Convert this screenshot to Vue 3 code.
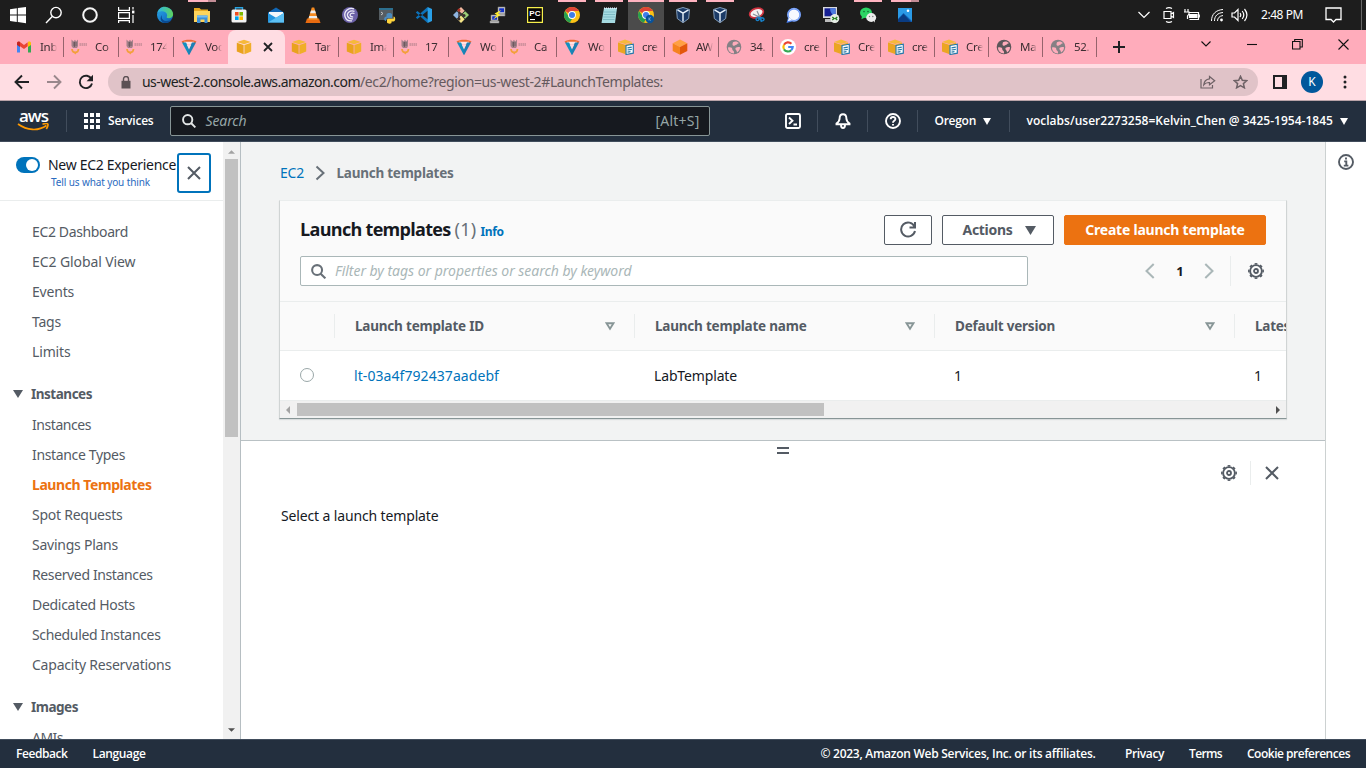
<script setup>
const launchers = [
  { icon: 'edge' },
  { icon: 'folder', run: 'multi' },
  { icon: 'store' },
  { icon: 'mail' },
  { icon: 'vlc' },
  { icon: 'torrent' },
  { icon: 'python' },
  { icon: 'vscode' },
  { icon: 'git' },
  { icon: 'putty' },
  { icon: 'pycharm' },
  { icon: 'chrome', run: 'one' },
  { icon: 'notepad', run: 'one' },
  { icon: 'chromek', run: 'active' },
  { icon: 'vbox', run: 'one' },
  { icon: 'vbox', run: 'one' },
  { icon: 'snip' },
  { icon: 'signal' },
  { icon: 'winscp' },
  { icon: 'wechat', run: 'one' },
  { icon: 'photos', run: 'multi' },
]

const tabs = [
  { icon: 'gmail', text: 'Inb' },
  { icon: 'canvas', text: 'Co' },
  { icon: 'canvas', text: '174' },
  { icon: 'voc', text: 'Voc' },
  { icon: 'ec2', active: true },
  { icon: 'ec2', text: 'Tar' },
  { icon: 'ec2', text: 'Ima' },
  { icon: 'canvas', text: '17' },
  { icon: 'voc', text: 'Wo' },
  { icon: 'canvas', text: 'Ca' },
  { icon: 'voc', text: 'Wo' },
  { icon: 'docs', text: 'cre' },
  { icon: 'cube', text: 'AW' },
  { icon: 'globe', text: '34.' },
  { icon: 'google', text: 'cre' },
  { icon: 'docs', text: 'Cre' },
  { icon: 'docs', text: 'cre' },
  { icon: 'docs', text: 'Cre' },
  { icon: 'globedark', text: 'Ma' },
  { icon: 'globe', text: '52.' },
]

const topLinks = [
  ['EC2 Dashboard', 96],
  ['EC2 Global View', 103.5],
  ['Events', 42],
  ['Tags', 29],
  ['Limits', 38.5],
]

const instanceLinks = [
  ['Instances', 59],
  ['Instance Types', 93],
  ['Launch Templates', 119.5, true],
  ['Spot Requests', 90.5],
  ['Savings Plans', 86],
  ['Reserved Instances', 120.5],
  ['Dedicated Hosts', 103],
  ['Scheduled Instances', 128.5],
  ['Capacity Reservations', 139],
]

const columns = [
  ['Launch template ID', 129],
  ['Launch template name', 151.5],
  ['Default version', 100],
  ['Latest version', 92],
]

// Tracks a label so that it spans the given width in pixels.
const vFit = {
  mounted(el, { value }) {
    const natural = el.getBoundingClientRect().width
    el.style.letterSpacing = (value - natural) / el.textContent.trim().length + 'px'
  },
}
</script>

<template>
  <svg class="sprite" width="0" height="0">
    <defs>
      <linearGradient id="gEdge" x1="0" y1="0" x2="1" y2="1">
        <stop offset="0" stop-color="#2aa7e0" /><stop offset=".5" stop-color="#1b83d2" /><stop offset="1" stop-color="#0c59a4" />
      </linearGradient>
      <linearGradient id="gEdge2" x1="0" y1="0" x2="1" y2="0">
        <stop offset="0" stop-color="#2bb5e8" /><stop offset="1" stop-color="#5ed35c" />
      </linearGradient>
    </defs>
    <symbol id="win" viewBox="0 0 18 18"><path fill="#fff" d="M1 3.2 7.8 2.2V8.6H1zM8.8 2 17 .9V8.6H8.8zM1 9.5H7.8V15.9L1 14.9zM8.8 9.5H17V17.2L8.8 16z" /></symbol>
    <symbol id="find" viewBox="0 0 18 18"><g fill="none" stroke="#fff" stroke-width="1.4"><circle cx="11" cy="6.6" r="5.2" /><path d="M7.2 10.4 1 17" /></g></symbol>
    <symbol id="cortana" viewBox="0 0 18 18"><circle cx="9" cy="9" r="6.8" fill="none" stroke="#f4f4f4" stroke-width="2" /></symbol>
    <symbol id="taskview" viewBox="0 0 18 18"><path fill="none" stroke="#fff" stroke-width="1.2" d="M1.6 1v3.4h10.8V1M1.6 17v-2.4h10.8V17M1.6 6.6h10.8v5.8H1.6zM16 1v2.6M16 9v8" /><path fill="#fff" d="M15 4.6h2.4v2.8H15z" /></symbol>
    <symbol id="edge" viewBox="0 0 18 18"><circle cx="9" cy="9" r="8" fill="url(#gEdge)" /><path fill="url(#gEdge2)" d="M1.3 7C3 1.600 7-.2 10.600 1.200c4 1 7 4.300 6.400 8C16.400 11.500 14 12.500 11.500 12c-1.500-.4-.5-1.500-.3-2.800C11 6.500 8 5 5.500 5.300 3.500 5.400 2 6 1.300 7z" /><path fill="#0b4a91" d="M6 9c-1.500 4.500 3 8 9.500 5-1.500 2-4 3.400-7 3C4 16 3.800 11 6 9z" /></symbol>
    <symbol id="folder" viewBox="0 0 18 18"><path fill="#e9a820" d="M1 2h5.500L8 3.500h7V6H1z" /><path fill="#ffd45c" d="M1 5h16v11H1z" /><path fill="#3d8fd8" d="M4 9.500h10.500V17h-3v-3.500h-4V17H4z" /><path fill="#76bdf0" d="M4 9.500h10.500v2H4z" /></symbol>
    <symbol id="store" viewBox="0 0 18 18"><path fill="none" stroke="#29a3e0" stroke-width="1.400" d="M5.500 4.500V1.800h7v2.700" /><rect x="1.500" y="3.600" width="15" height="13" rx="1.500" fill="#f3f3f3" /><path fill="#f25022" d="M5 6h3.600v3.600H5z" /><path fill="#7fba00" d="M9.400 6H13v3.600H9.400z" /><path fill="#00a4ef" d="M5 10.400h3.600V14H5z" /><path fill="#ffb900" d="M9.400 10.400H13V14H9.400z" /></symbol>
    <symbol id="mail" viewBox="0 0 18 18"><path fill="#1267b4" d="M1 6.500 9 1.500l8 5V16H1z" /><path fill="#f4f8fb" d="M2 6h14v4l-7 4-7-4z" /><path fill="#2597e0" d="M1 7l8 4.800L17 7v9.500H1z" /><path fill="#5cc0f3" d="M1 16.500 17 7v9.500z" /></symbol>
    <symbol id="vlc" viewBox="0 0 18 18"><path fill="#e96b10" d="M3 12.500h12l1.500 4.500h-15z" /><path fill="#f68b20" d="M7.800 1.500h2.400L14 14H4z" /><path fill="#eee" d="m7 4.500-.9 2.800h5.800L11 4.500zM5.300 10h7.400l.7 2.300H4.600z" /></symbol>
    <symbol id="torrent" viewBox="0 0 18 18"><circle cx="9" cy="9" r="8" fill="#6c62a8" /><g fill="none" stroke="#eceaf6" stroke-width="1.300"><path d="M13 2.800C7 .8 2.700 6 4 10.500c1 3.200 4 4.700 7 4.300" /><path d="M13.500 5.300C9 3.600 5.600 7 6.600 10c.8 2 3 3.200 5.400 2.800" /><path d="M13.500 7.500C10.500 6.400 8.700 8 9.200 9.600c.5 1 1.600 1.500 3 1.200" /></g></symbol>
    <symbol id="python" viewBox="0 0 18 18"><path fill="#555d62" d="M1 2h14v12H1z" /><path fill="#2d6f8e" d="M1 2h14v2H1z" /><path stroke="#c6c6c6" fill="none" d="m3 6 2 1.500L3 9" /><path fill="#4b8bbe" d="M8.500 8.500c0-2 5.500-2 5.500 0V12H9.500c-1.500 0-1.500 2-1.500 3-2.500 0-2.500-4.500.5-4.500z" /><path fill="#ffd43b" d="M15.500 10.500c2.300 0 2.300 5 0 5h-2V17c-1 1-4 .8-4.500-.5V14c0-1 1-1.300 2-1.300h4.500z" /></symbol>
    <symbol id="vscode" viewBox="0 0 18 18"><path fill="#0c71b9" d="m.8 6.500 1.600-1.400L13.500 14l-1 3zM.8 11.500l1.600 1.400L13.500 4l-1-3z" /><path fill="#29a0e8" d="m12.600 1 4.400 2v12l-4.400 2V1z" /></symbol>
    <symbol id="git" viewBox="0 0 18 18"><path fill="#f0b8a0" d="M9 1 5.300 4.700 9 8.400l3.700-3.700z" /><path fill="#8fb4e0" d="M4.800 5.300 1 9l3.800 3.700L8.500 9z" /><path fill="#9ccf78" d="M13.200 5.300 9.500 9l3.700 3.700L17 9z" /><path fill="#f4e488" d="M9 9.600 5.300 13.300 9 17l3.700-3.700z" /><path d="M7 4v9M7 6l5 4" stroke="#392b2b" stroke-width="1.300" /><circle cx="7" cy="13" r="1.500" fill="#392b2b" /><circle cx="12" cy="9.500" r="1.500" fill="#392b2b" /><circle cx="7" cy="4" r="1.500" fill="#b33125" /></symbol>
    <symbol id="putty" viewBox="0 0 18 18"><path fill="#d4d4d4" stroke="#777" stroke-width=".6" d="M9 1h7v7H9zM2 9h7v6H2zM8 8h8v2H8zM1 15h9v2H1z" /><path fill="#1230c8" d="M10.200 2.200H15v4h-4.800zM3.200 10.200H8v3.600H3.200z" /><path fill="#ffec2b" d="m12.500 4-7 3.500 2.500 1.500-4 4.500L11.500 9 9 7.800z" /></symbol>
    <symbol id="pycharm" viewBox="0 0 18 18"><path fill="#050505" stroke="#f6ef4b" stroke-width="1.200" d="M1.600 1.600h14.800v14.800H1.600z" /><text x="3.300" y="9.500" fill="#fff" font-family="Liberation Sans, sans-serif" font-weight="700" font-size="8">PC</text><path fill="#fff" d="M4 13h5v1.100H4z" /></symbol>
    <symbol id="chrome" viewBox="0 0 18 18"><circle cx="9" cy="9" r="8" fill="#fbc116" /><path fill="#de4437" d="M9 9 2.100 5A8 8 0 0 1 16 5H9z" /><path fill="#269f50" d="M2.100 5 6 11l3 2-2.200 3.700A8 8 0 0 1 2.100 5z" /><circle cx="9" cy="9" r="3.900" fill="#fff" /><circle cx="9" cy="9" r="3" fill="#3f7de8" /></symbol>
    <symbol id="chromek" viewBox="0 0 18 18"><use href="#chrome" /><circle cx="12.800" cy="13" r="4.200" fill="#08539c" /><path stroke="#9cc3e8" stroke-width=".7" fill="none" d="M12 11.500v3M13.800 11.500l-1.600 1.500 1.600 1.500" /></symbol>
    <symbol id="notepad" viewBox="0 0 18 18"><path fill="#a6dbe2" d="M4 2h13l-2 15H1.500z" /><path stroke="#6fb0ba" stroke-width=".7" d="M4 6h11.500M3.600 8.500h11.500M3.300 11h11.500M3 13.500h11.500" /><path stroke="#eef" stroke-width="1.200" stroke-dasharray="1 1" d="M4 2.200h13" /></symbol>
    <symbol id="vbox" viewBox="0 0 18 18"><path fill="#1b3a66" d="m9 1.500 6.500 2-.8 9L9 16.800 3.300 12.500l-.8-9z" /><path fill="none" stroke="#e8f2fb" stroke-width="1.400" d="m3.500 3.800 5.500 3.400 5.500-3.400M9 7v8.700" /><path fill="none" stroke="#8fa9c6" stroke-width=".9" d="m9 1.500 6.500 2-.8 9L9 16.800 3.300 12.500l-.8-9z" /></symbol>
    <symbol id="snip" viewBox="0 0 18 18"><ellipse cx="8.500" cy="7" rx="7" ry="4.600" fill="#f6f1f1" stroke="#cf3340" stroke-width="1.700" transform="rotate(-18 8.500 7)" /><path stroke="#8a929b" stroke-width="1.200" d="m9 5 3 6.500M5 8l6.500 3" /><path fill="none" stroke="#177fc6" stroke-width="1.400" d="M9.500 11.600a1.500 1.500 0 1 0 .1 0M11 11.500l4 .5a1.500 1.500 0 1 1-2 1.500zM12 12l1.500 4" /></symbol>
    <symbol id="signal" viewBox="0 0 18 18"><circle cx="9" cy="8.800" r="7" fill="#4a80f0" /><path fill="#4a80f0" d="m3 12-1.500 5L7 15.500z" /><circle cx="9" cy="8.800" r="6.200" fill="none" stroke="#dfe8ff" stroke-width=".5" /><circle cx="9" cy="8.800" r="5.300" fill="#f7f9ff" /><path fill="#f7f9ff" d="m4 11.500-1.100 3.800L7 14z" /></symbol>
    <symbol id="winscp" viewBox="0 0 18 18"><path fill="#d8dade" d="M1 1h14v11H1z" /><path fill="#151f94" d="M2.500 2.300h11v8H2.500z" /><path fill="#4c7be0" d="M8 2.300h5.500v8C10 9 8 6 8 2.300z" /><path fill="#bcbcbc" d="M3 13h9v3H3z" /><circle cx="12.800" cy="12.500" r="4.500" fill="#e7eee7" /><path fill="none" stroke="#23801f" stroke-width="1.300" d="m10.300 11 1.800 1.500-1.800 1.500M15.300 11l-1.800 1.500 1.800 1.500" /></symbol>
    <symbol id="wechat" viewBox="0 0 18 18"><ellipse cx="7" cy="6.800" rx="6" ry="5.200" fill="#2bd564" /><path fill="#2bd564" d="m3 10-.6 3.300L6 11.500z" /><circle cx="5" cy="5.600" r=".8" fill="#136b34" /><circle cx="9" cy="5.600" r=".8" fill="#136b34" /><ellipse cx="12.200" cy="11.500" rx="5" ry="4.400" fill="#ececec" /><path fill="#ececec" d="m14.500 14.500 1.500 2.300-.2-3z" /><circle cx="10.500" cy="10.500" r=".7" fill="#777" /><circle cx="13.800" cy="10.500" r=".7" fill="#777" /></symbol>
    <symbol id="photos" viewBox="0 0 18 18"><path fill="#2a9ae6" d="M2 2h14v14H2z" /><path fill="#0f60b4" d="m2 13 5.500-6L16 15v1H2z" /><path fill="#0a3c82" d="M2 13.500 7.500 8l7.500 8H2z" /><circle cx="12" cy="4.800" r="1.300" fill="#fff" /></symbol>

    <symbol id="gmail" viewBox="0 0 16 16"><path fill="#4285f4" d="M1 4.500v9h3V7z" /><path fill="#34a853" d="M12 7v6.500h3v-9z" /><path fill="#ea4335" d="M1 5c0-2.200 2-2.800 3.300-1.700L8 6l3.700-2.700v4L8 10 4 7.200z" /><path fill="#c5221f" d="M1 4.300V6l3 2V3.100C2.700 2 1 2.800 1 4.300z" /><path fill="#fbbc04" d="M15 4.300V6l-3 2V3.100c1.300-1.100 3-.3 3 1.200z" /></symbol>
    <symbol id="canvas" viewBox="0 0 16 16"><path fill="#857379" d="M.5.5 2.500 2.500 4 .8l1.200 1.700L7 .5V7L6 9H2L.5 7z" opacity=".75" /><path stroke="#5e5055" stroke-width=".7" d="M2 4h4M2 6h4M3.500 3v5" /><path stroke="#ab7c87" stroke-width="3.200" stroke-dasharray="1.400 .6" opacity=".6" d="M8.500 5.500H16" /><path fill="none" stroke="#f3a03c" stroke-width="1.700" d="M1 10c.2 4.500 6.300 4.500 6.500 0" /><path fill="#f3a03c" d="M2.500 13.300h3.500L4.300 15.500z" /></symbol>
    <symbol id="voc" viewBox="0 0 16 16"><path fill="#ee6a34" d="M.5 2.500C4 .3 12 .3 15.500 2.500L14.300 4H1.700z" /><path fill="#ffe3e3" d="M3 2.800h10l-1 2.400H4z" /><path fill="#138fc0" d="M1 3.500h4L8.500 10v5.500H7.500z" /><path fill="#1e7fb2" d="M15 3.500h-4L7.500 10v5.500h1z" /><path fill="#ffd8dd" d="m5.700 5.500 2.300 5 2.300-5z" /></symbol>
    <symbol id="ec2" viewBox="0 0 16 16"><path fill="#f6b93a" d="m8 .8 7 2.200-7 2.300L1 3z" /><path fill="#e9a21e" d="M.8 3.800 7.600 6v9.300L.8 12.600z" /><path fill="#f0ae28" d="M15.200 3.800 8.400 6v9.300l6.800-2.700z" /></symbol>
    <symbol id="docs" viewBox="0 0 16 16"><path fill="#f6b93a" d="M7 .5 14 3 7 5 0 3z" /><path fill="#eba522" d="M0 3.500 7 5.700V15l-7-2.500z" /><path fill="#f0ae28" d="M14 3.500 7 5.700V15l7-2.500z" /><path fill="#fff" stroke="#2879aa" stroke-width="1.200" d="m8 6.500 7.300-1.300v9L8 15.500z" /><path stroke="#2879aa" stroke-width="1.200" d="m9.500 8.800 4.300-.7M9.500 11l4.300-.7M9.500 13.200l3-.5" /></symbol>
    <symbol id="cube" viewBox="0 0 16 16"><path fill="#ffa043" d="m8 .4 7.300 3.800L8 8 .7 4.200z" /><path fill="#f5821f" d="M.7 4.200 8 8v7.800L.7 12z" /><path fill="#e3570b" d="M15.300 4.200 8 8v7.800l7.300-3.800z" /></symbol>
    <symbol id="globe" viewBox="0 0 16 16"><circle cx="8" cy="8" r="7.300" fill="#858085" /><path fill="#ffacbb" d="M2 8.500c3-.5 4.500.3 4.300 2 .2 1.400 1.700 1 1.700 2.800v1.200C4.500 14.300 2 12 2 8.500zM7 3.300c2-1.500 4.500-1 6 1-2 .3-2 1.500-3.500 1.700-.5 1.300-3 1-3-.5 0-1 .3-1.500.5-2.200zM9.500 9c1.500-1 4.500-1.200 4.500-.5 0 2-1.200 4-3 5 0-2.500-2-2.500-1.500-4.500z" /></symbol>
    <symbol id="globedark" viewBox="0 0 16 16"><circle cx="8" cy="8" r="7.300" fill="#5c565a" /><path fill="#ffacbb" d="M2 8.500c3-.5 4.500.3 4.300 2 .2 1.400 1.700 1 1.700 2.800v1.200C4.500 14.300 2 12 2 8.500zM7 3.300c2-1.500 4.500-1 6 1-2 .3-2 1.500-3.500 1.700-.5 1.300-3 1-3-.5 0-1 .3-1.500.5-2.200zM9.500 9c1.500-1 4.500-1.200 4.500-.5 0 2-1.200 4-3 5 0-2.500-2-2.500-1.500-4.500z" /></symbol>
    <symbol id="google" viewBox="0 0 16 16"><circle cx="8" cy="8" r="8" fill="#fff" /><g fill="none" stroke-width="2.200"><path stroke="#ea4335" d="M4 5.700A4.700 4.700 0 0 1 11.400 4.800" /><path stroke="#fbbc05" d="M4 5.700a4.700 4.700 0 0 0 0 4.600" /><path stroke="#34a853" d="M4 10.300a4.700 4.700 0 0 0 7.200.9" /><path stroke="#4285f4" d="M11.200 11.200A4.700 4.700 0 0 0 12.700 8H8.200" /></g></symbol>

    <symbol id="gear" viewBox="0 0 16 16"><g fill="none" stroke="#545b64"><circle cx="8" cy="8" r="5.900" stroke-width="1.900" /><circle cx="8" cy="8" r="7.200" stroke-width="1.500" pathLength="80" stroke-dasharray="5 5" stroke-dashoffset="2.500" /><circle cx="8" cy="8" r="2" stroke-width="1.800" /></g></symbol>
    <symbol id="cross" viewBox="0 0 14 14"><path fill="none" stroke="#545b64" stroke-width="2" d="m1 1 12 12M13 1 1 13" /></symbol>
    <symbol id="lens" viewBox="0 0 16 16"><g fill="none" stroke="currentColor" stroke-width="2.200"><circle cx="6.500" cy="6.500" r="5.300" /><path d="m10.300 10.300 5 5" /></g></symbol>
    <symbol id="sort" viewBox="0 0 10 9"><path fill="none" stroke="#879596" stroke-width="1.900" d="M1.500 1.200h7L5 6.800z" /></symbol>
  </svg>

  <div class="screen">
    <header class="taskbar">
      <div class="system">
        <span v-for="n in ['win', 'find', 'cortana', 'taskview']" :key="n"><svg><use :href="'#' + n" /></svg></span>
      </div>
      <div class="launchers">
        <span v-for="(l, i) in launchers" :key="i" :class="l.run"><svg><use :href="'#' + l.icon" /></svg></span>
      </div>
      <div class="tray">
        <svg width="14" height="10" viewBox="0 0 14 10"><path d="m1.500 2 5.500 5.500L12.500 2" /></svg>
        <svg width="14" height="18" viewBox="0 0 14 18"><path d="M4 2.500c2-1.200 4-1.200 6 0M4 15.500c2 1.200 4 1.200 6 0M2 5.500h7v7H2zM9 8l2.500-1.500v5L9 10" /></svg>
        <svg width="17" height="14" viewBox="0 0 17 14"><path d="M2 1v3M5 1v3M1 4h5v2L4.500 8v3M5.500 4.500h10v7h-9" /><path d="M6.500 6.500h7.500v3H6.500zM16.300 6.500v3" fill="#fff" /></svg>
        <svg width="14" height="14" viewBox="0 0 14 14"><g stroke-width="1"><path d="M1.500 13C1.500 6 6 2 13 1.500" /><path d="M4.500 13c0-5 3-8 8.500-8.500" /><path d="M7.500 13c0-3 2-5 5.500-5.500" /></g><circle cx="11.500" cy="12" r="1.400" fill="#fff" stroke="none" /></svg>
        <svg width="17" height="14" viewBox="0 0 17 14"><path d="M1 5h2.500L7 1.500v11L3.500 9H1zM9 5c1 1.300 1 2.700 0 4M11.200 3c2 2.500 2 5.500 0 8M13.500 1c3 3.700 3 8.300 0 12" /></svg>
        <span v-fit="42">2:48 PM</span>
        <svg class="note" width="17" height="16" viewBox="0 0 17 16"><path d="M1 1h15v11.500h-5L8.500 15 6 12.500H1z" stroke-width="1.300" /></svg>
        <i></i>
      </div>
    </header>

    <nav class="tabs">
      <div v-for="(t, i) in tabs" :key="i" class="tab" :class="{ on: t.active, before: i === 3, narrow: i > 7 }">
        <svg class="fav"><use :href="'#' + t.icon" /></svg>
        <svg v-if="t.active" class="tabx" viewBox="0 0 10 10"><path d="m1 1 8 8M9 1 1 9" /></svg>
        <span v-else>{{ t.text }}</span>
      </div>
      <svg class="plus" viewBox="0 0 12 12"><path d="M6 0v12M0 6h12" /></svg>
      <div class="winctl">
        <svg width="12" height="8" viewBox="0 0 12 8"><path d="m1.500 1.500 4.500 4.500 4.500-4.500" /></svg>
        <svg width="10" height="10" viewBox="0 0 10 10"><path d="M0 5.500h10" /></svg>
        <svg width="11" height="11" viewBox="0 0 11 11"><path d="M.5 2.500h7.500v7.500H.5zM2.700 2.500V.5h7.600v7.500H8.200" /></svg>
        <svg width="11" height="11" viewBox="0 0 11 11"><path d="m.5.5 10 10M10.500.5l-10 10" /></svg>
      </div>
    </nav>

    <div class="toolbar">
      <div class="moves">
        <svg width="16" height="16" viewBox="0 0 16 16"><path d="M15 8H2M8 1.500 1.500 8 8 14.500" /></svg>
        <svg class="dim" width="16" height="16" viewBox="0 0 16 16"><path d="M1 8h13M8 1.500 14.500 8 8 14.500" /></svg>
        <svg width="16" height="16" viewBox="0 0 16 16"><path d="M13.500 5A6.200 6.200 0 1 0 14 9.500" /><path fill="#202124" stroke="none" d="M15 .8v6.400H8.600z" /></svg>
      </div>
      <div class="omni">
        <svg class="lock" width="10" height="13" viewBox="0 0 10 13"><path fill="#5c5054" d="M.5 4.800h9V12.500h-9z" /><path fill="none" stroke="#5c5054" stroke-width="1.400" d="M2.500 5V3a2.500 2.500 0 0 1 5 0v2" /></svg>
        <b v-fit="218">us-west-2.console.aws.amazon.com</b><span v-fit="303">/ec2/home?region=us-west-2#LaunchTemplates:</span>
        <svg class="share" width="16" height="14" viewBox="0 0 16 14"><path d="M1 4v9h11.500v-3M9.500 1.500 14.700 5.700 9.500 9.800V7.500C6.500 7.300 5 8.300 3.700 10 4 6.500 6 4.200 9.500 3.800z" /></svg>
        <svg class="star" width="15" height="14" viewBox="0 0 15 14"><path d="m7.500 1.300 1.800 4 4.400.4-3.300 2.900 1 4.200-3.900-2.200-3.900 2.200 1-4.200L1.300 5.700l4.400-.4z" /></svg>
      </div>
      <svg class="panel" width="14" height="14" viewBox="0 0 14 14"><path d="M1 1h12v12H1z" fill="none" stroke="#202124" stroke-width="2" /><path d="M9 1h4v12H9z" fill="#202124" /></svg>
      <span class="avatar">K</span>
      <svg class="dots" width="4" height="14" viewBox="0 0 4 14"><circle cx="2" cy="2" r="1.500" /><circle cx="2" cy="7" r="1.500" /><circle cx="2" cy="12" r="1.500" /></svg>
    </div>

    <div class="awsnav">
      <div class="logo"><span v-fit="29">aws</span>
        <svg width="33" height="9" viewBox="0 0 33 9"><path d="M1 1c9 6.500 20 7.500 28.500 1.500" /><path d="M25.500 1.200c3-.9 5-.6 5.300 0s-.2 2.800-1.500 4.800" /></svg>
      </div>
      <i></i>
      <svg class="grid" width="16" height="16" viewBox="0 0 16 16"><path d="M0 0h4v4H0zM6 0h4v4H6zM12 0h4v4h-4zM0 6h4v4H0zM6 6h4v4H6zM12 6h4v4h-4zM0 12h4v4H0zM6 12h4v4H6zM12 12h4v4h-4z" /></svg>
      <b v-fit="45.500" class="svc">Services</b>
      <div class="search"><svg><use href="#lens" /></svg><em v-fit="41">Search</em><span v-fit="44">[Alt+S]</span></div>
      <svg class="shell" width="16" height="16" viewBox="0 0 16 16"><rect x="1" y="1" width="14" height="14" rx="1.500" /><path d="m4 4.500 3.500 3.300L4 11M8.500 11.500H12" /></svg>
      <i></i>
      <svg class="nico" width="16" height="16" viewBox="0 0 16 16"><path d="M8 1.200c-2.300 0-3.400 2-3.400 4.200 0 2.300-1.300 3.700-3.100 5v.9h13v-.9c-1.800-1.300-3.100-2.700-3.100-5 0-2.200-1.100-4.200-3.400-4.200zM6 12c0 4 4 4 4 0" /></svg>
      <i></i>
      <svg class="nico" width="16" height="16" viewBox="0 0 16 16"><circle cx="8" cy="8" r="7" /><path d="M5.700 6.300c0-3 4.700-3 4.700-.2C10.400 7.800 8 7.800 8 9.700M8 11v1.600" /></svg>
      <i></i>
      <b v-fit="41.500" class="region">Oregon</b><svg class="caret" viewBox="0 0 8 7"><path d="M0 0h8L4 7z" /></svg>
      <i class="wide"></i>
      <b v-fit="306.500" class="user">voclabs/user2273258=Kelvin_Chen @ 3425-1954-1845</b><svg class="caret" viewBox="0 0 8 7"><path d="M0 0h8L4 7z" /></svg>
    </div>

    <div class="body">
      <aside>
        <div class="side">
          <div class="promo">
            <span class="toggle"></span>
            <div><span v-fit="128">New EC2 Experience</span><a v-fit="99">Tell us what you think</a></div>
            <button><svg width="14" height="14"><use href="#cross" /></svg></button>
          </div>
          <ul class="first"><li v-for="[t, w] in topLinks" :key="t"><span v-fit="w">{{ t }}</span></li></ul>
          <h4><svg viewBox="0 0 10 8"><path d="M0 0h10L5 8z" /></svg><span v-fit="61">Instances</span></h4>
          <ul><li v-for="[t, w, on] in instanceLinks" :key="t" :class="{ on }"><span v-fit="w">{{ t }}</span></li></ul>
          <h4><svg viewBox="0 0 10 8"><path d="M0 0h10L5 8z" /></svg><span v-fit="47">Images</span></h4>
          <ul><li><span v-fit="31">AMIs</span></li></ul>
        </div>
        <div class="vscroll">
          <svg viewBox="0 0 8 4"><path fill="#a3a3a3" d="M0 4h8L4 0z" /></svg>
          <span></span>
          <svg viewBox="0 0 8 4"><path fill="#505050" d="M0 0h8L4 4z" /></svg>
        </div>
      </aside>

      <main>
        <section class="top">
          <div class="crumbs"><a v-fit="24">EC2</a><svg width="10" height="16" viewBox="0 0 10 16"><path d="m1.500 1.500 7 6.500-7 6.500" /></svg><b v-fit="117">Launch templates</b></div>
          <div class="card">
            <div class="chead">
              <h2 v-fit="150.500">Launch templates</h2><span v-fit="22" class="count">(1)</span><b v-fit="23" class="info">Info</b>
              <div class="btns">
                <button class="refresh"><svg width="18" height="18" viewBox="0 0 18 18"><path d="M15.500 5.500a7 7 0 1 0 .5 4.500M16 1v5.500h-5.500" /></svg></button>
                <button class="actions"><span v-fit="50">Actions</span><svg width="11" height="9" viewBox="0 0 11 9"><path d="M0 0h11L5.500 9z" /></svg></button>
                <button class="create"><span v-fit="159.500">Create launch template</span></button>
              </div>
            </div>
            <div class="cfilter">
              <div class="input"><svg><use href="#lens" /></svg><em v-fit="296.500">Filter by tags or properties or search by keyword</em></div>
              <svg class="prev" viewBox="0 0 10 16"><path d="M8.700 1 1.500 8l7.200 7" /></svg>
              <b>1</b>
              <svg class="next" viewBox="0 0 10 16"><path d="m1.300 1 7.200 7-7.200 7" /></svg>
              <i></i>
              <svg class="gear"><use href="#gear" /></svg>
            </div>
            <div class="thead">
              <div v-for="[t, w] in columns" :key="t"><b v-fit="w">{{ t }}</b><svg><use href="#sort" /></svg></div>
            </div>
            <div class="trow">
              <span class="radio"></span>
              <div><a v-fit="145">lt-03a4f792437aadebf</a></div>
              <div><span v-fit="83">LabTemplate</span></div>
              <div>1</div>
              <div>1</div>
            </div>
            <div class="hscroll">
              <svg viewBox="0 0 4 8"><path fill="#a3a3a3" d="M4 0v8L0 4z" /></svg><span></span><svg viewBox="0 0 4 8"><path fill="#505050" d="M0 0v8l4-4z" /></svg>
            </div>
          </div>
        </section>
        <section class="detail">
          <div class="handle"></div>
          <div class="dtools"><svg class="gear"><use href="#gear" /></svg><i></i><svg width="14" height="14"><use href="#cross" /></svg></div>
          <p><span v-fit="157.500">Select a launch template</span></p>
        </section>
      </main>

      <div class="rail">
        <svg width="16" height="16" viewBox="0 0 16 16"><circle cx="8" cy="8" r="7" /><path d="M8 3.600v1.900M6.200 7.400H8.300v4M5.800 11.600h4.600" /></svg>
      </div>
    </div>

    <footer>
      <span v-fit="51.500">Feedback</span><span v-fit="53">Language</span>
      <span v-fit="275" class="copy">© 2023, Amazon Web Services, Inc. or its affiliates.</span>
      <span v-fit="39">Privacy</span><span v-fit="33">Terms</span><span v-fit="103">Cookie preferences</span>
    </footer>
  </div>
</template>

<style>
body { margin: 0; overflow: hidden; }
</style>

<style scoped>
.sprite { position: absolute; }
.screen { width: 1366px; height: 768px; display: flex; flex-direction: column; overflow: hidden; background: #fff; color: #16191f; font: 14px/20px "Noto Sans", "Open Sans", sans-serif; white-space: nowrap; }
.screen * { box-sizing: border-box; }
svg, span, b, em, a, i { flex: none; }
svg { display: block; }
button { font: inherit; margin: 0; padding: 0; background: #fff; display: flex; align-items: center; justify-content: center; }

.taskbar { height: 30px; background: #1d1d1d; display: flex; flex: none; }
.system, .launchers { display: flex; }
.system span { width: 36px; height: 30px; display: grid; place-items: center; }
.launchers { margin-left: 2px; }
.launchers span { width: 37px; height: 30px; display: grid; place-items: center; position: relative; }
.system svg, .launchers svg { width: 18px; height: 18px; }
.launchers .one::before, .launchers .multi::before, .launchers .active::before { content: ""; position: absolute; top: 0; left: 5px; width: 28px; height: 2px; background: #ffb3c0; }
.launchers .multi::before { background: linear-gradient(90deg, #ffb3c0 20px, #c38d96 20px); }
.launchers .active { background: linear-gradient(#4b4b4b, #4b4b4b) no-repeat 1px 0 / 36px 30px; }
.launchers span.active::before { left: 1px; width: 36px; }
.tray { margin-left: auto; display: flex; align-items: center; color: #fff; font-size: 12px; }
.tray svg { fill: none; stroke: #fff; stroke-width: 1.200; margin-right: 11px; }
.tray svg:nth-of-type(2) { margin-right: 7.500px; }
.tray svg:nth-of-type(3) { margin-right: 10px; }
.tray svg:nth-of-type(4) { margin-right: 7px; }
.tray svg:nth-of-type(5) { margin-right: 13px; }
.tray .note { margin: 0 19px 0 22px; }
.tray i { width: 1px; height: 30px; background: #666; margin-right: 4px; }

.tabs { height: 34px; flex: none; background: #ffacbb; display: flex; padding-left: 9px; }
.tab { width: 55px; flex: none; display: flex; align-items: center; padding-left: 7px; position: relative; }
.tab.narrow { width: 54px; }
.tab::after { content: ""; position: absolute; right: 0; top: 7px; width: 1px; height: 20px; background: #96636c; }
.tab.on::after, .tab.before::after { display: none; }
.fav { width: 16px; height: 16px; }
.tab span { width: 17px; margin-left: 8px; overflow: hidden; font-size: 11.500px; letter-spacing: -.3px; color: #3b2d31; -webkit-mask-image: linear-gradient(90deg, #000 65%, transparent); mask-image: linear-gradient(90deg, #000 65%, transparent); }
.tab.on { background: #ffdde3; border-radius: 8px 8px 0 0; width: 57px; margin: 0 -1px; padding-left: 8px; }
.tabx { width: 10px; height: 10px; margin-left: 11px; fill: none; stroke: #202124; stroke-width: 1.800; }
.plus { width: 12px; height: 12px; margin: 11px 0 0 16px; fill: none; stroke: #202124; stroke-width: 2; }
.winctl { margin: 7px 17px 0 auto; height: 14px; display: flex; align-items: center; }
.winctl svg { fill: none; stroke: #111; stroke-width: 1.100; margin-left: 35px; }

.toolbar { height: 37px; flex: none; background: #ffdde3; border-bottom: 1px solid #b9a3a8; display: flex; align-items: center; }
.moves { width: 108px; display: flex; gap: 16px; padding-left: 14px; fill: none; stroke: #202124; stroke-width: 1.900; }
.moves .dim { opacity: .45; }
.omni { width: 1150px; height: 28px; border-radius: 14px; background: #e0c3c8; display: flex; align-items: center; color: #655a5e; }
.omni b { font-weight: 400; color: #201f22; }
.lock { margin: 0 11px 0 13px; }
.share { margin-left: auto; fill: none; stroke: #6e6266; stroke-width: 1.200; }
.star { margin: 0 10px 0 17px; fill: none; stroke: #6e6266; stroke-width: 1.500; }
.panel { margin-left: 15px; }
.avatar { width: 22px; height: 22px; margin-left: 14px; border-radius: 50%; background: #01579b; color: #fff; font-size: 12px; line-height: 22px; text-align: center; }
.dots { margin-left: 20px; fill: #202124; }

.awsnav { height: 41px; flex: none; background: #232f3e; display: flex; align-items: center; color: #fff; font-size: 12px; font-weight: 600; font-family: "Open Sans", "Noto Sans", sans-serif; border-bottom: 1px solid #414d5c; }
.awsnav b { font-weight: 600; }
.awsnav > i { width: 1px; height: 22px; background: #414d5c; margin: 0 17px 0 16px; }
.logo { margin-left: 17px; width: 33px; height: 24px; }
.logo span { display: block; width: max-content; margin-left: 2px; font-size: 17px; line-height: 14px; height: 14px; }
.logo svg { fill: none; stroke: #ff9900; stroke-width: 1.700; }
.grid { fill: #fff; }
.svc { margin-left: 8px; }
.search { width: 540px; height: 30px; margin: 0 75px 0 16px; border: 1px solid #879596; border-radius: 2px; background: #16191f; display: flex; align-items: center; font: 14px/20px "Noto Sans", sans-serif; color: #95a5a6; }
.search svg { width: 14px; height: 14px; margin: 0 10px 0 11px; color: #e3e6e6; }
.search span { margin-left: auto; margin-right: 9px; }
.shell, .nico { fill: none; stroke: #fff; stroke-width: 1.900; }
.awsnav .caret { width: 8px; height: 7px; margin-left: 6.500px; fill: #fff; }
.awsnav > i.wide { margin: 0 17px 0 18px; }

.body { flex: 1; min-height: 0; display: flex; }
aside { width: 241px; flex: none; display: flex; border-right: 1px solid #b6bec2; overflow: hidden; }
.side { width: 223px; color: #545b64; }
.promo { height: 59px; border-bottom: 1px solid #eaeded; display: flex; position: relative; }
.toggle { width: 24px; height: 16px; margin: 15px 8px 0 16px; padding: 2px 0 0 10px; border-radius: 8px; background: #0073bb; }
.toggle::after { content: ""; display: block; width: 12px; height: 12px; border-radius: 50%; background: #fff; }
.promo > div { padding-top: 13px; color: #16191f; }
.promo > div > span, .promo a { display: table; }
.promo a { font-size: 10px; line-height: 14px; color: #2a6bc0; margin-left: 3px; }
.promo button { position: absolute; left: 177px; top: 11px; width: 34px; height: 40px; border: 2px solid #0073bb; border-radius: 3px; }
ul { list-style: none; margin: 0; padding: 0 0 0 32px; }
ul.first { padding-top: 16px; }
li { height: 30px; line-height: 30px; }
li.on { color: #ec7211; font-weight: 700; }
h4 { margin: 17px 0 6px; height: 20px; padding-left: 13px; display: flex; align-items: center; font-size: 13.500px; font-weight: 700; }
h4 svg { width: 10px; height: 8px; margin-right: 8px; fill: #545b64; }
.vscroll { width: 17px; background: #f1f1f1; padding: 8px 0 7px 2px; display: flex; flex-direction: column; }
.vscroll svg { width: 7px; height: 4px; margin-left: 3px; flex: none; }
.vscroll span { width: 13px; height: 278px; background: #c1c1c1; margin-top: 5px; }
.vscroll svg:last-child { margin-top: auto; }

main { width: 1084px; flex: none; display: flex; flex-direction: column; }
.top { height: 299px; background: #f2f3f3; border-bottom: 1px solid #b9c1c4; flex: none; overflow: hidden; }
.crumbs { display: flex; align-items: center; height: 20px; margin: 21px 0 17px 39px; }
.crumbs a, .trow a { color: #0073bb; }
.crumbs svg { margin: 0 11.500px 0 11px; fill: none; stroke: #687078; stroke-width: 2; }
.crumbs b { color: #687078; font-size: 13.500px; }
.card { width: 1008px; height: 219px; margin-left: 38px; background: #fff; border: 1px solid #d0d4d4; border-top-color: #eaeded; border-bottom-color: #879596; overflow: hidden; box-shadow: 0 1px 1px rgba(0, 28, 36, .1); }
.chead { height: 45px; padding: 14px 20px 0; background: #fafafa; display: flex; align-items: flex-start; }
h2 { font-size: 18px; line-height: 29px; margin: 0; font-weight: 700; flex: none; font-family: "Open Sans", "Noto Sans", sans-serif; }
.count { font-size: 18px; line-height: 29px; margin-left: 4px; color: #687078; }
.info { font-size: 12px; line-height: 33px; margin-left: 4px; color: #0073bb; }
.btns { margin-left: auto; display: flex; gap: 10px; }
.btns button { height: 30px; border: 1px solid #545b64; border-radius: 2px; color: #545b64; font-weight: 700; }
.btns .refresh { width: 48px; }
.refresh svg { fill: none; stroke: #545b64; stroke-width: 2; }
.btns .actions { width: 112px; gap: 12px; padding-left: 2px; }
.actions svg { fill: #545b64; }
.btns .create { width: 202px; border-color: #ec7211; background: #ec7211; color: #fff; }
.cfilter { height: 55px; padding: 0 22px 5px 20px; background: #fafafa; display: flex; align-items: center; }
.input { width: 728px; flex: none; height: 30px; border: 1px solid #aab7b8; border-radius: 2px; background: #fff; display: flex; align-items: center; color: #aab7b8; }
.input svg { width: 15px; height: 15px; margin: 0 9px 0 10px; color: #687078; }
.prev, .next { width: 10px; height: 16px; fill: none; stroke: #aab7b8; stroke-width: 2; }
.prev { margin-left: 117px; }
.cfilter b { width: 10px; text-align: center; font-size: 13px; margin: 0 19px 0 20px; }
.cfilter i { width: 1px; height: 30px; background: #eaeded; margin: 0 17px 0 16px; }
.gear { width: 16px; height: 16px; overflow: visible; }
.thead { height: 50px; border: solid #eaeded; border-width: 1px 0; background: #fafafa; display: flex; padding-left: 55px; color: #545b64; }
.thead > div { width: 300px; flex: none; padding: 0 20px; display: flex; align-items: center; justify-content: space-between; position: relative; }
.thead > div::before { content: ""; position: absolute; left: -1px; top: 12px; width: 1px; height: 24px; background: #eaeded; }
.thead b { font-size: 13.500px; }
.thead svg { width: 10px; height: 9px; }
.trow { height: 50px; border-bottom: 1px solid #eaeded; display: flex; align-items: center; line-height: 50px; }
.trow > div { width: 300px; flex: none; }
.radio { width: 14px; height: 14px; margin: 0 40px 2px 20px; border: 1px solid #9aa7a8; border-radius: 50%; }
.hscroll { height: 17px; background: #f1f1f1; display: flex; align-items: center; padding: 0 6px; }
.hscroll span { width: 527px; height: 13px; background: #c1c1c1; margin-left: 7px; }
.hscroll svg { width: 4px; height: 8px; }
.hscroll svg:last-child { margin-left: auto; }

.detail { flex: 1; }
.handle { width: 12px; height: 7px; margin: 6px 0 0 536px; border: solid #545b64; border-width: 2px 0; }
.dtools { display: flex; align-items: center; justify-content: flex-end; height: 24px; margin: 7px 46px 0 0; }
.dtools i { width: 1px; height: 24px; background: #eaeded; margin: 0 14px 0 13px; }
.detail p { margin: 21px 0 0 40px; }
.rail { flex: 1; border-left: 1px solid #ccd1d1; padding: 12px 0 0 12px; }
.rail svg { fill: none; stroke: #545b64; stroke-width: 1.900; }

footer { height: 29px; flex: none; background: #232f3e; border-top: 1px solid #414d5c; color: #fff; font: 600 12px/28px "Open Sans", "Noto Sans", sans-serif; display: flex; padding: 0 16px; gap: 25px; }
.copy { margin-left: auto; margin-right: 4.500px; }
</style>
